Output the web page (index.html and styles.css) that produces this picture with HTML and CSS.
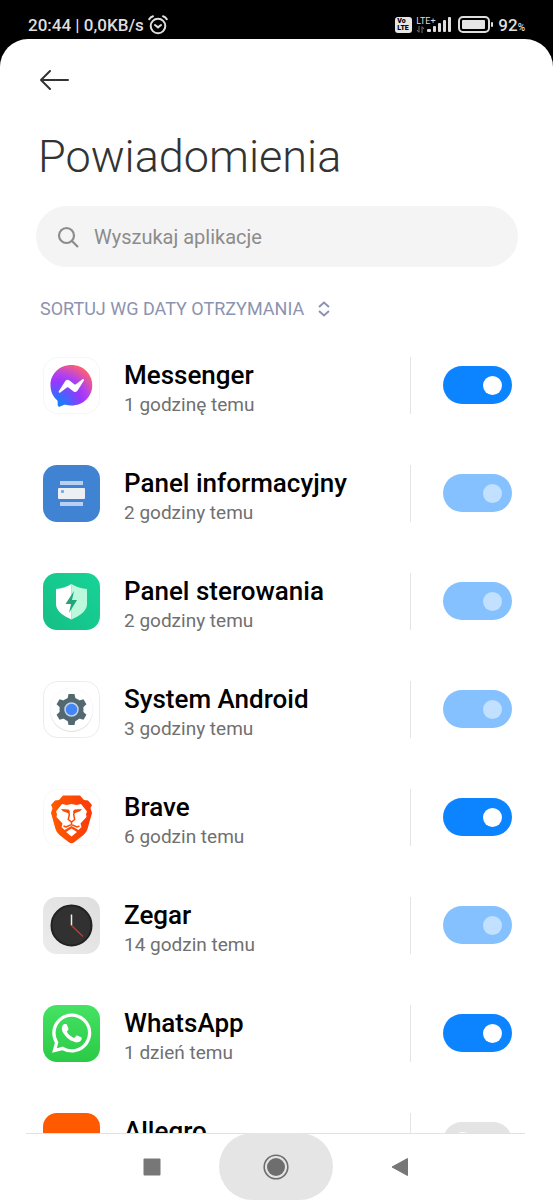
FILE: index.html
```
<!DOCTYPE html>
<html lang="pl">
<head>
    <meta charset="UTF-8">
    <meta name="viewport" content="width=device-width, initial-scale=1.0">
    <title>Powiadomienia</title>
    <link rel="stylesheet" href="styles.css">
</head>
<body>

<div class="status-bar">
    <div class="status-left">
        <span>20:44 | 0,0KB/s</span>
        <svg width="20" height="20" viewBox="0 0 20 20" fill="none" stroke="#dedede" stroke-width="2" stroke-linecap="round">
            <circle cx="10" cy="11" r="7.3"/>
            <path d="M7 10l3 2.4 3-2.4M1.2 4.2Q2.5 2 5 1.2M18.8 4.2Q17.5 2 15 1.2"/>
        </svg>
    </div>
    <div class="status-right">
        <span class="volte"><span>Vo</span><span>LTE</span></span>
        <div class="signal">
            <div class="network">
                <span>LTE+</span>
                <svg width="9" height="7" viewBox="0 0 9 7" stroke="#777" fill="none">
                    <path d="M3 0v6M1 4l2 2.5M6 7V1M8 3L6 .5"/>
                </svg>
            </div>
            <svg width="25" height="17" viewBox="0 0 25 17" fill="#dedede">
                <rect x="0" y="13" width="4" height="3" rx="1"/>
                <rect x="6" y="10" width="3" height="6" rx="1"/>
                <rect x="11" y="7" width="3" height="9" rx="1"/>
                <rect x="16" y="4" width="3" height="12" rx="1"/>
                <rect x="21" y="1" width="3" height="15" rx="1"/>
            </svg>
        </div>
        <svg class="battery" width="36" height="17" viewBox="0 0 36 17">
            <rect x="1" y="1" width="30" height="15" rx="4" fill="none" stroke="#dedede" stroke-width="2"/>
            <rect x="4" y="4" width="23" height="9" rx="1" fill="#e6e6e6"/>
            <rect x="33" y="6" width="2" height="5" rx="1" fill="#dedede"/>
        </svg>
        <span class="percent">92<small>%</small></span>
    </div>
</div>

<main class="screen">
    <header class="app-bar">
        <button type="button" class="back-button" aria-label="Wstecz">
            <svg width="30" height="20" viewBox="0 0 30 20" fill="none" stroke="#333" stroke-width="2" stroke-linecap="round" stroke-linejoin="round">
                <path d="M28 10H1M10 1l-9 9 9 9"/>
            </svg>
        </button>
    </header>

    <h1>Powiadomienia</h1>

    <label class="search">
        <svg width="22" height="22" viewBox="0 0 22 22" fill="none" stroke="#8c8c8c" stroke-width="2.2">
            <circle cx="9.5" cy="9.5" r="7.5"/>
            <path d="M15 15l6 6"/>
        </svg>
        <input type="search" placeholder="Wyszukaj aplikacje" aria-label="Wyszukaj aplikacje">
    </label>

    <button type="button" class="sort-button">
        SORTUJ WG DATY OTRZYMANIA
        <svg width="12" height="16" viewBox="0 0 12 16" fill="none" stroke="#8c93b0" stroke-width="2">
            <path d="M1 6l5-4.5L11 6M1 10l5 4.5 5-4.5"/>
        </svg>
    </button>

    <ul class="app-list">
        <li class="app-row">
            <svg class="app-icon" viewBox="0 0 57 57">
                <defs>
                    <radialGradient id="messenger" cx=".15" cy="1" r="1.1">
                        <stop offset="0" stop-color="#0a86ff"/>
                        <stop offset=".15" stop-color="#2078ff"/>
                        <stop offset=".55" stop-color="#9a36ff"/>
                        <stop offset=".7" stop-color="#b040f0"/>
                        <stop offset="1" stop-color="#ff5f75"/>
                    </radialGradient>
                </defs>
                <rect x=".5" y=".5" width="56" height="56" rx="14" fill="#fff" stroke="#f6f6f6"/>
                <g transform="translate(7.5 8) scale(1.74)">
                    <path fill="url(#messenger)" d="M12 0C5.24 0 0 4.95 0 11.64c0 3.5 1.43 6.52 3.77 8.61.2.18.31.42.32.69l.07 2.13a.96.96 0 0 0 1.35.85l2.38-1.05c.2-.09.43-.1.64-.05 1.09.3 2.26.46 3.47.46 6.76 0 12-4.95 12-11.64S18.76 0 12 0z"/>
                    <path fill="#fff" d="M4.79 15.04l3.53-5.59a1.8 1.8 0 0 1 2.6-.48l2.8 2.1a.72.72 0 0 0 .87 0l3.79-2.87c.5-.38 1.16.22.82.75l-3.52 5.59a1.8 1.8 0 0 1-2.6.48l-2.8-2.1a.72.72 0 0 0-.87 0l-3.79 2.87c-.5.38-1.17-.22-.83-.75z"/>
                </g>
            </svg>
            <div class="app-text">
                <label class="app-name" for="messenger-switch">Messenger</label>
                <span class="app-time">1 godzinę temu</span>
            </div>
            <div class="app-switch"><input type="checkbox" id="messenger-switch" class="switch" checked></div>
        </li>

        <li class="app-row">
            <svg class="app-icon" viewBox="0 0 57 57">
                <rect width="57" height="57" rx="14" fill="#4083d2"/>
                <rect x="17" y="16" width="23" height="4" fill="#b9d1ef"/>
                <rect x="15" y="23" width="27" height="11" rx="1" fill="#eceff3"/>
                <rect x="18" y="25" width="3" height="3" rx="1" fill="#7ba7dd"/>
                <rect x="17" y="37" width="23" height="4" fill="#b9d1ef"/>
            </svg>
            <div class="app-text">
                <label class="app-name" for="info-switch">Panel informacyjny</label>
                <span class="app-time">2 godziny temu</span>
            </div>
            <div class="app-switch"><input type="checkbox" id="info-switch" class="switch" checked disabled></div>
        </li>

        <li class="app-row">
            <svg class="app-icon" viewBox="0 0 57 57">
                <defs>
                    <linearGradient id="security" x1="0" y1="1" x2="1" y2="0">
                        <stop offset="0" stop-color="#14bf85"/>
                        <stop offset="1" stop-color="#18d397"/>
                    </linearGradient>
                </defs>
                <rect width="57" height="57" rx="14" fill="url(#security)"/>
                <path fill="#fff" d="M28.5 11C24 14 18 15.5 13 16v15c0 7 7 11.5 15.5 15.5z"/>
                <path fill="#bcf8dc" d="M28.5 11C33 14 39 15.5 44 16v15c0 7-7 11.5-15.5 15.5z"/>
                <path fill="#1fa67a" d="M31 18l-8.500 13H28l-2 9 8-13h-5z"/>
            </svg>
            <div class="app-text">
                <label class="app-name" for="control-switch">Panel sterowania</label>
                <span class="app-time">2 godziny temu</span>
            </div>
            <div class="app-switch"><input type="checkbox" id="control-switch" class="switch" checked disabled></div>
        </li>

        <li class="app-row">
            <svg class="app-icon" viewBox="0 0 57 57">
                <rect x=".5" y=".5" width="56" height="56" rx="14" fill="#fff" stroke="#ececec"/>
                <circle cx="28.5" cy="29.5" r="21.5" fill="#dcdcdc"/>
                <circle cx="28.5" cy="28.5" r="21.5" fill="#fff" stroke="#f3f3f3" stroke-width=".5"/>
                <g fill="#546870">
                    <circle cx="28.5" cy="28.5" r="12"/>
                    <path id="tooth" d="M25.500 13h6l1.500 7v17l-1.500 7h-6L24 37V20z"/>
                    <use href="#tooth" transform="rotate(60 28.5 28.5)"/>
                    <use href="#tooth" transform="rotate(120 28.5 28.5)"/>
                </g>
                <circle cx="28.5" cy="28.5" r="6.5" fill="#4285f4" stroke="#c3d3e8" stroke-width="1.5"/>
            </svg>
            <div class="app-text">
                <label class="app-name" for="system-switch">System Android</label>
                <span class="app-time">3 godziny temu</span>
            </div>
            <div class="app-switch"><input type="checkbox" id="system-switch" class="switch" checked disabled></div>
        </li>

        <li class="app-row">
            <svg class="app-icon" viewBox="0 0 57 57">
                <defs>
                    <linearGradient id="brave">
                        <stop offset="0" stop-color="#ff5a00"/>
                        <stop offset="1" stop-color="#fb3a08"/>
                    </linearGradient>
                </defs>
                <rect x=".5" y=".5" width="56" height="56" rx="14" fill="#fff" stroke="#f8f8f8"/>
                <path fill="url(#brave)" d="M20 6.5h17l4 4.500 4 .5 4 4.500-1.500 3 1.500 5-4.500 16q-1 3.500-4 6l-9 7q-3 2.500-6 0l-9-7q-3-2.500-4-6L8 24l1.500-5L8 16l4-4.500 4-.5z"/>
                <path fill="#fff" d="M19 15l4.500 1 5-1 5 1 4.500-1 6 7.500-1 2.500.5 3-6 6.500 1 3.500-3 3-7-4-7 4-3-3 1-3.500-6-6.500.5-3-1-2.500z"/>
                <path fill="#fff" d="M28.5 39.500l5.500 3.500-5.500 4.500L23 43z"/>
                <path fill="#fb4b05" d="M18 20l7.500.5 1.500 1.800-1 2.200-6-2.200zM39 20l-7.500.5-1.500 1.800 1 2.200 6-2.200z"/>
                <path fill="none" stroke="#fb4b05" stroke-width="1.500" d="M25.500 22.500l.8 3-1 5 3.200 2.500 3.200-2.500-1-5 .8-3M28.500 33v3.500M20.500 37l2.500 1 5.500-2.500L34 38l2.500-1"/>
            </svg>
            <div class="app-text">
                <label class="app-name" for="brave-switch">Brave</label>
                <span class="app-time">6 godzin temu</span>
            </div>
            <div class="app-switch"><input type="checkbox" id="brave-switch" class="switch" checked></div>
        </li>

        <li class="app-row">
            <svg class="app-icon" viewBox="0 0 57 57">
                <defs>
                    <linearGradient id="clock" x1="0" y1="1" x2="1" y2="0">
                        <stop offset="0" stop-color="#ececec"/>
                        <stop offset="1" stop-color="#dedede"/>
                    </linearGradient>
                </defs>
                <rect width="57" height="57" rx="14" fill="url(#clock)"/>
                <circle cx="28.5" cy="28.5" r="20" fill="#313131" stroke="#222" stroke-width="2"/>
                <path d="M28.5 28.5v-11" stroke="#eee" stroke-width="1.5"/>
                <path d="M28.5 28.5l11.5 11" stroke="#b8403c" stroke-width="1.2"/>
            </svg>
            <div class="app-text">
                <label class="app-name" for="clock-switch">Zegar</label>
                <span class="app-time">14 godzin temu</span>
            </div>
            <div class="app-switch"><input type="checkbox" id="clock-switch" class="switch" checked disabled></div>
        </li>

        <li class="app-row">
            <svg class="app-icon" viewBox="0 0 57 57">
                <defs>
                    <linearGradient id="whatsapp" x1="0" y1="0" x2="0" y2="1">
                        <stop offset="0" stop-color="#45e263"/>
                        <stop offset="1" stop-color="#2bca46"/>
                    </linearGradient>
                </defs>
                <rect width="57" height="57" rx="14" fill="url(#whatsapp)"/>
                <g transform="translate(9 8.5) scale(1.64)" fill="#fff">
                    <path d="M17.472 14.382c-.297-.149-1.758-.867-2.03-.967-.273-.099-.471-.148-.67.15-.197.297-.767.966-.94 1.164-.173.199-.347.223-.644.075-.297-.15-1.255-.463-2.39-1.475-.883-.788-1.48-1.761-1.653-2.059-.173-.297-.018-.458.13-.606.134-.133.298-.347.446-.52.149-.174.198-.298.298-.497.099-.198.05-.371-.025-.52-.075-.149-.669-1.612-.916-2.207-.242-.579-.487-.5-.669-.51-.173-.008-.371-.01-.57-.01-.198 0-.52.074-.792.372-.272.297-1.04 1.016-1.04 2.479 0 1.462 1.065 2.875 1.213 3.074.149.198 2.096 3.2 5.077 4.487.709.306 1.262.489 1.694.625.712.227 1.36.195 1.871.118.571-.085 1.758-.719 2.006-1.413.248-.694.248-1.289.173-1.413-.074-.124-.272-.198-.57-.347"/>
                    <path d="M12.051 21.785h-.004a9.87 9.87 0 0 1-5.031-1.378l-.361-.214-3.741.982.998-3.648-.235-.374a9.86 9.86 0 0 1-1.51-5.26c.001-5.45 4.436-9.884 9.888-9.884 2.64 0 5.122 1.03 6.988 2.898a9.825 9.825 0 0 1 2.893 6.994c-.003 5.45-4.437 9.884-9.885 9.884m8.413-18.297A11.815 11.815 0 0 0 12.05 0C5.495 0 .16 5.335.157 11.892c0 2.096.547 4.142 1.588 5.945L.057 24l6.305-1.654a11.882 11.882 0 0 0 5.683 1.448h.005c6.554 0 11.89-5.335 11.893-11.893a11.821 11.821 0 0 0-3.48-8.413z"/>
                </g>
            </svg>
            <div class="app-text">
                <label class="app-name" for="whatsapp-switch">WhatsApp</label>
                <span class="app-time">1 dzień temu</span>
            </div>
            <div class="app-switch"><input type="checkbox" id="whatsapp-switch" class="switch" checked></div>
        </li>

        <li class="app-row">
            <svg class="app-icon" viewBox="0 0 57 57">
                <rect width="57" height="57" rx="14" fill="#ff5a00"/>
            </svg>
            <div class="app-text">
                <label class="app-name" for="allegro-switch">Allegro</label>
            </div>
            <div class="app-switch"><input type="checkbox" id="allegro-switch" class="switch"></div>
        </li>
    </ul>

    <nav class="nav-bar">
        <button type="button" class="nav-button" aria-label="Ostatnie">
            <svg width="18" height="18" viewBox="0 0 18 18"><rect x=".5" y=".5" width="17" height="17" rx="1" fill="#777"/></svg>
        </button>
        <button type="button" class="nav-button pressed" aria-label="Ekran główny">
            <svg width="26" height="26" viewBox="0 0 26 26">
                <circle cx="13" cy="13" r="11.8" fill="none" stroke="#6e6e6e" stroke-width="1.6"/>
                <circle cx="13" cy="13" r="9" fill="#6e6e6e"/>
            </svg>
        </button>
        <button type="button" class="nav-button" aria-label="Cofnij">
            <svg width="18" height="20" viewBox="0 0 18 20"><path d="M1 10l15.500-8.500v17z" fill="#777" stroke="#777" stroke-linejoin="round"/></svg>
        </button>
    </nav>
</main>

</body>
</html>
```
FILE: styles.css
```
* {
    box-sizing: border-box;
}

body {
    display: flex;
    flex-direction: column;
    height: 100vh;
    margin: 0;
    background-color: #000;
    font-family: Roboto, sans-serif;
    color: #000;
}

button {
    padding: 0;
    border: none;
    background: none;
    font-family: inherit;
    cursor: pointer;
}

/* Status bar */
.status-bar {
    display: flex;
    justify-content: space-between;
    align-items: center;
    flex-shrink: 0;
    height: 39px;
    padding: 10px 28px 0;
    color: #dedede;
    font-size: 17px;
    font-weight: 500;
}

.status-left,
.status-right {
    display: flex;
    align-items: center;
    gap: 4px;
}

.volte {
    display: flex;
    flex-direction: column;
    width: 17px;
    padding: 1px 2px;
    border-radius: 3px;
    background-color: #e6e6e6;
    color: #000;
    font-size: 7px;
    font-weight: 900;
    line-height: 7px;
}

.signal {
    display: flex;
    align-items: center;
}

.network {
    display: flex;
    flex-direction: column;
    width: 11px;
    font-size: 9px;
    font-weight: 400;
    line-height: 10px;
}

.battery {
    margin-left: 2px;
}

.percent small {
    font-size: 10px;
}

/* Settings screen */
.screen {
    display: flex;
    flex-direction: column;
    flex: 1;
    min-height: 0;
    border-radius: 28px 28px 0 0;
    background-color: #fff;
}

.app-bar {
    display: flex;
    align-items: center;
    flex-shrink: 0;
    height: 82px;
    padding: 0 40px;
}

.back-button svg {
    display: block;
}

h1 {
    margin: 0 38px 13px;
    color: #333;
    font-size: 45px;
    font-weight: 300;
    line-height: 72px;
}

.search {
    display: flex;
    align-items: center;
    flex-shrink: 0;
    gap: 15px;
    height: 61px;
    margin: 0 35px 0 36px;
    padding: 0 21px;
    border-radius: 31px;
    background-color: #f4f4f4;
}

.search input {
    flex: 1;
    min-width: 0;
    padding: 0;
    border: none;
    outline: none;
    background: none;
    font-family: inherit;
    font-size: 20px;
}

.search input::placeholder {
    color: #8c8c8c;
}

.sort-button {
    display: flex;
    align-items: center;
    flex-shrink: 0;
    gap: 14px;
    height: 64px;
    padding: 19px 40px 0;
    color: #8c93b0;
    font-size: 18px;
}

/* App list */
.app-list {
    flex: 1;
    min-height: 0;
    margin: 0;
    padding: 0 41px 0 43px;
    overflow-y: auto;
    scrollbar-width: none;
    list-style: none;
}

.app-row {
    display: flex;
    align-items: center;
    height: 108px;
}

.app-icon {
    flex-shrink: 0;
    width: 57px;
    height: 57px;
}

.app-text {
    display: flex;
    flex-direction: column;
    flex: 1;
    min-height: 68px;
    padding: 8px 12px 0 24px;
}

.app-name {
    font-size: 26px;
    font-weight: 500;
    line-height: 32px;
}

.app-time {
    color: #707070;
    font-size: 19px;
    line-height: 28px;
}

.app-switch {
    display: flex;
    align-items: center;
    height: 57px;
    padding-left: 32px;
    border-left: 1px solid #e4e4e4;
}

.switch {
    display: flex;
    align-items: center;
    appearance: none;
    width: 69px;
    height: 38px;
    margin: 0;
    padding: 0 10px;
    border-radius: 19px;
    background-color: #e4e4e4;
    cursor: pointer;
}

.switch::before {
    content: "";
    width: 19px;
    height: 19px;
    border-radius: 50%;
    background-color: #fff;
}

.switch:checked {
    justify-content: flex-end;
    background-color: #0d84ff;
}

.switch:disabled {
    background-color: #86c1ff;
    cursor: default;
}

.switch:disabled::before {
    background-color: #c2e0ff;
}

/* Navigation bar */
.nav-bar {
    display: flex;
    justify-content: center;
    flex-shrink: 0;
    gap: 10px;
    height: 67px;
    margin: 0 28px 0 26px;
    border-top: 1px solid #e2e2e2;
}

.nav-button {
    display: flex;
    justify-content: center;
    align-items: center;
    width: 114px;
    height: 67px;
    margin-top: -1px;
    border-radius: 34px;
}

.nav-button.pressed {
    background-color: #e5e5e5;
}
```
